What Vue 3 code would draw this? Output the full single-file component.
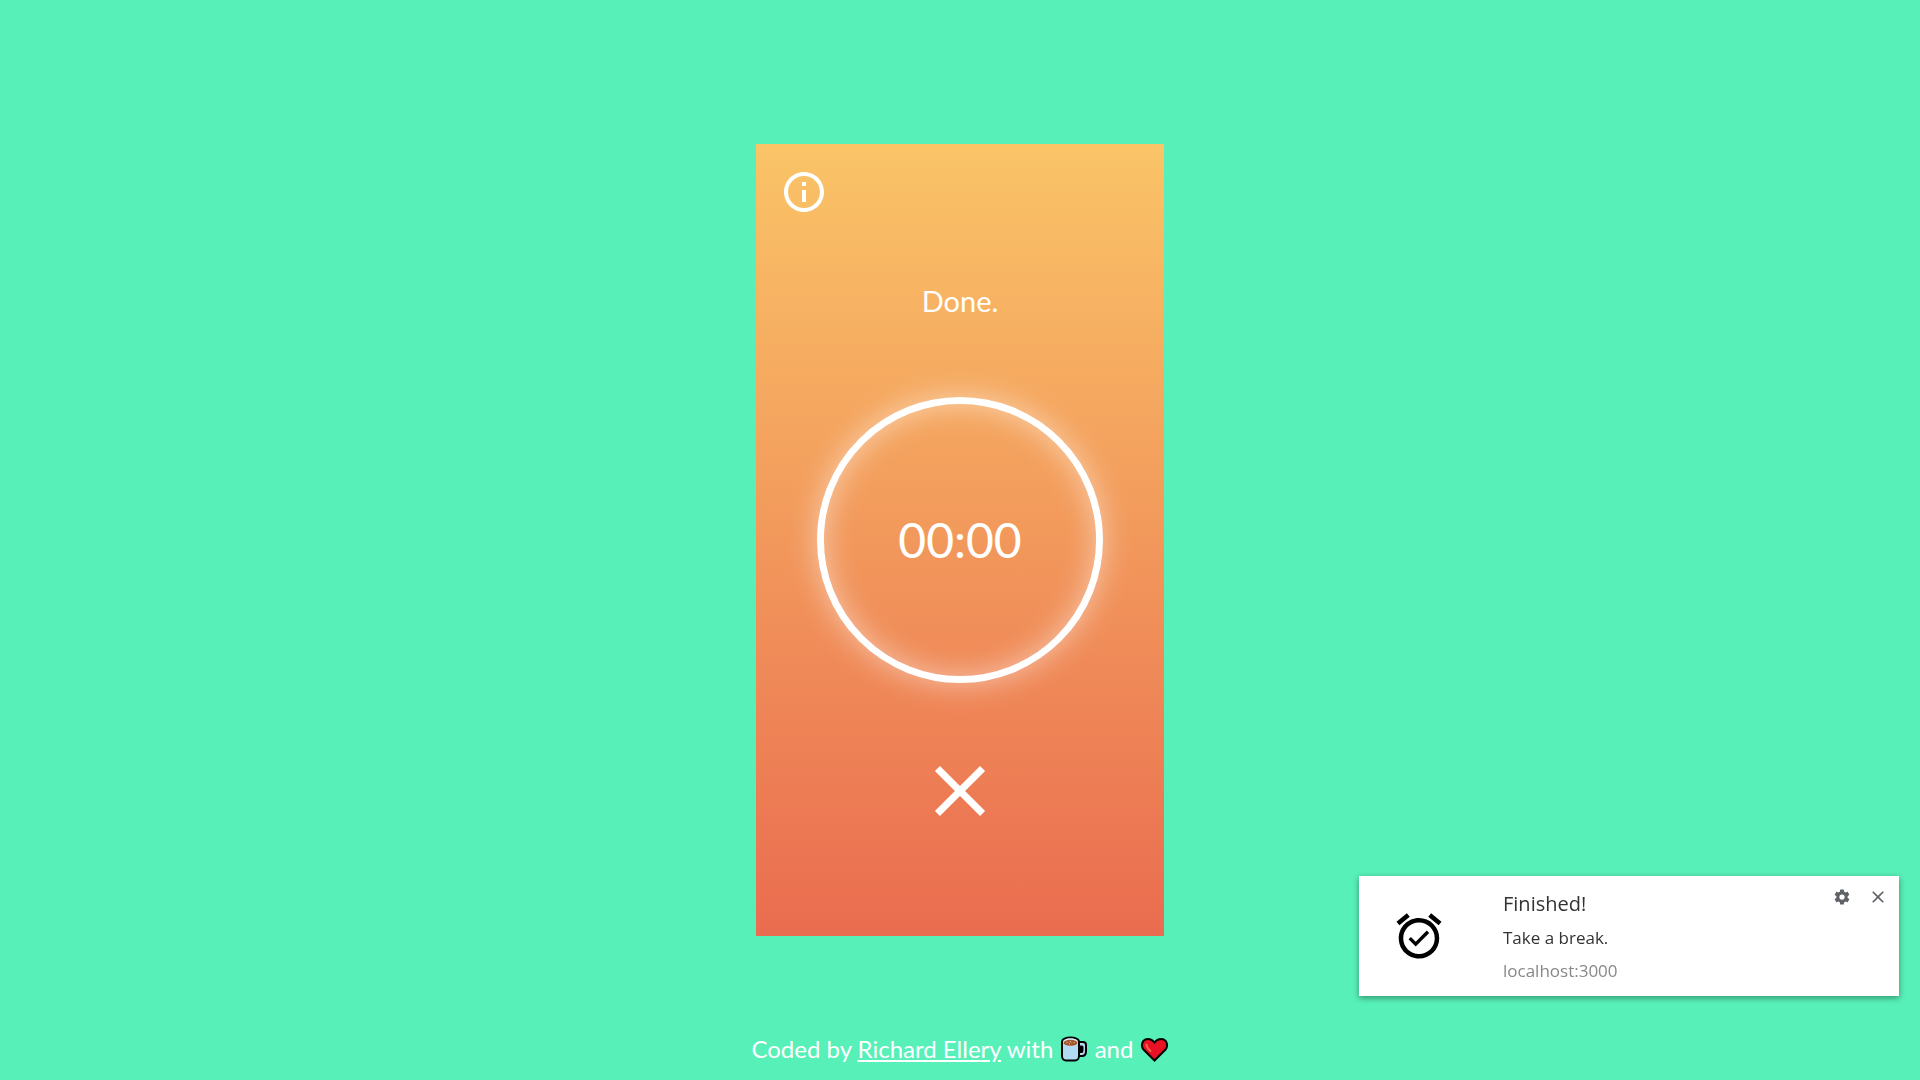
<script setup>
import { ref } from 'vue'

const status = ref('Done.')
const time = ref('00:00')
const notification = ref({
  title: 'Finished!',
  message: 'Take a break.',
  origin: 'localhost:3000',
})
</script>

<template>
  <div class="page">
    <main class="timer">
      <button class="icon-button info" type="button" aria-label="Information">
        <svg viewBox="0 0 24 24" width="48" height="48" fill="currentColor" aria-hidden="true">
          <path d="M11 7h2v2h-2zm0 4h2v6h-2zm1-9C6.48 2 2 6.48 2 12s4.48 10 10 10 10-4.48 10-10S17.520 2 12 2zm0 18c-4.410 0-8-3.590-8-8s3.590-8 8-8 8 3.590 8 8-3.590 8-8 8z" />
        </svg>
      </button>
      <h1 class="status">{{ status }}</h1>
      <div class="dial" role="timer">{{ time }}</div>
      <button class="icon-button cancel" type="button" aria-label="Cancel">
        <svg viewBox="0 0 24 24" width="86" height="86" fill="currentColor" aria-hidden="true">
          <path d="M19 6.410 17.590 5 12 10.590 6.410 5 5 6.410 10.590 12 5 17.590 6.410 19 12 13.410 17.590 19 19 17.590 13.410 12z" />
        </svg>
      </button>
    </main>

    <footer class="footer">
      Coded by <a href="#">Richard Ellery</a> with
      <svg class="emoji" viewBox="2 0 29 27" role="img" aria-label="coffee">
        <path d="M20 6h5q3 0 3 3v6q0 5-4 5h-4z" fill="#b3daf3" stroke="#000" stroke-width="2" stroke-linejoin="round" />
        <path d="M22 9.500h2q1.500 0 1.500 1.500v3.500q0 2.500-2 2.500H22z" fill="#000" />
        <path d="M4 6c0-6 17-6 17 0v14c0 3-2 4.500-4 4.500H8c-2 0-4-1.500-4-4.500z" fill="#b3daf3" stroke="#000" stroke-width="2" />
        <ellipse cx="12.500" cy="6.300" rx="7.500" ry="4" fill="#d5ecf9" />
        <ellipse cx="12.500" cy="6.800" rx="7" ry="3" fill="#a5562c" />
        <path d="M8.500 6l1 1M12 5l1 1.500M15.500 6l1 1M11 7.500l1 .5" stroke="#e8c3a5" stroke-width="1" />
      </svg>
      and
      <svg class="emoji" viewBox="2 0 29 27" role="img" aria-label="love">
        <path d="M16.500 24.500 5.500 13.500C2.500 10 4 3 10 3c3 0 5 1.500 6.500 3.500C18 4.500 20 3 23 3c6 0 7.500 7 4.500 10.500z" fill="#e81224" stroke="#000" stroke-width="2" />
        <path d="M8.500 8.500q0 3 4 6.500" fill="none" stroke="#f4644d" stroke-width="2" stroke-linecap="round" />
      </svg>
    </footer>

    <aside class="toast" role="status">
      <div class="toast-icon">
        <svg viewBox="0 0 24 24" width="54" height="54" fill="currentColor" aria-hidden="true">
          <path d="M22 5.720l-4.600-3.860-1.290 1.530 4.600 3.860zM7.880 3.390 6.600 1.860 2 5.710l1.290 1.530zM12 4c-4.970 0-9 4.030-9 9s4.020 9 9 9a9 9 0 0 0 0-18zm0 16c-3.870 0-7-3.130-7-7s3.130-7 7-7 7 3.130 7 7-3.130 7-7 7zm-1.460-5.470L8.410 12.400l-1.060 1.060 3.180 3.180 6-6-1.060-1.060z" />
        </svg>
      </div>
      <div class="toast-text">
        <strong>{{ notification.title }}</strong>
        <p>{{ notification.message }}</p>
        <small>{{ notification.origin }}</small>
      </div>
      <div class="toast-actions">
        <button class="icon-button" type="button" aria-label="Notification settings">
          <svg viewBox="0 0 24 24" width="18" height="18" fill="currentColor" aria-hidden="true">
            <path d="M19.430 12.980c.04-.32.07-.64.07-.98s-.03-.66-.07-.98l2.110-1.650c.19-.15.24-.42.12-.64l-2-3.460c-.12-.22-.39-.3-.61-.22l-2.490 1c-.52-.4-1.080-.73-1.690-.98l-.38-2.650A.49.49 0 0 0 14 2h-4c-.25 0-.46.18-.49.42l-.38 2.650c-.61.25-1.170.59-1.690.98l-2.490-1c-.23-.09-.49 0-.61.22l-2 3.460c-.13.22-.07.49.12.64l2.110 1.650c-.04.32-.07.65-.07.98s.03.66.07.98l-2.110 1.650c-.19.15-.24.42-.12.64l2 3.460c.12.22.39.3.61.22l2.490-1c.52.4 1.080.73 1.690.98l.38 2.650c.03.24.24.42.49.42h4c.25 0 .46-.18.49-.42l.38-2.650c.61-.25 1.170-.59 1.690-.98l2.490 1c.23.09.49 0 .61-.22l2-3.460c.12-.22.07-.49-.12-.64zM12 15.500a3.500 3.500 0 1 1 0-7 3.500 3.500 0 0 1 0 7z" />
          </svg>
        </button>
        <button class="icon-button" type="button" aria-label="Dismiss notification">
          <svg viewBox="0 0 24 24" width="20" height="20" fill="currentColor" aria-hidden="true">
            <path d="M19 6.410 17.590 5 12 10.590 6.410 5 5 6.410 10.590 12 5 17.590 6.410 19 12 13.410 17.590 19 19 17.590 13.410 12z" />
          </svg>
        </button>
      </div>
    </aside>
  </div>
</template>

<style>
body {
  margin: 0;
  background: #57f0b8;
}
</style>

<style scoped>
.page {
  display: grid;
  grid-template-rows: 1fr auto 1fr;
  justify-items: center;
  min-height: 100vh;
  color: #fff;
  font-family: Lato, sans-serif;
}

.timer {
  grid-row: 2;
  display: flex;
  flex-direction: column;
  align-items: center;
  box-sizing: border-box;
  width: 408px;
  max-width: 100%;
  padding: 24px 24px 102px;
  background: linear-gradient(#fac467, #ea6c50);
}

.icon-button {
  display: block;
  padding: 0;
  border: 0;
  background: none;
  color: inherit;
  cursor: pointer;
}

.icon-button svg {
  display: block;
}

.info {
  align-self: flex-start;
}

.status {
  margin: 67px 0 78px;
  font-size: 29px;
  font-weight: 400;
  line-height: 36px;
}

.dial {
  display: flex;
  align-items: center;
  justify-content: center;
  box-sizing: border-box;
  width: 286px;
  height: 286px;
  margin-bottom: 65px;
  border: 7px solid #fff;
  border-radius: 50%;
  box-shadow:
    0 0 30px rgba(255, 255, 255, 0.5),
    inset 0 0 30px rgba(255, 255, 255, 0.5);
  font-size: 48px;
  line-height: 56px;
}

.footer {
  grid-row: 3;
  align-self: end;
  padding-bottom: 16px;
  font-size: 24px;
  line-height: 30px;
}

.footer a {
  color: inherit;
}

.emoji {
  width: 29px;
  height: 27px;
  vertical-align: -5px;
}

.toast {
  position: fixed;
  right: 21px;
  bottom: 84px;
  display: flex;
  box-sizing: border-box;
  width: 540px;
  height: 120px;
  background: #fff;
  box-shadow: 0 2px 6px rgba(0, 0, 0, 0.4);
  color: #333;
  font-family: "Open Sans", "Noto Sans", sans-serif;
}

.toast-icon {
  display: flex;
  align-items: center;
  justify-content: center;
  width: 120px;
  color: #000;
}

.toast-text {
  display: flex;
  flex: 1;
  flex-direction: column;
  gap: 9px;
  padding: 15px 0 0 24px;
}

.toast-text strong {
  font-size: 20px;
  font-weight: 400;
  line-height: 26px;
}

.toast-text p,
.toast-text small {
  margin: 0;
  font-size: 17px;
  line-height: 24px;
}

.toast-text small {
  color: #888;
}

.toast-actions {
  display: flex;
  align-items: center;
  gap: 17px;
  height: 42px;
  padding-right: 11px;
  color: #5f6368;
}
</style>
